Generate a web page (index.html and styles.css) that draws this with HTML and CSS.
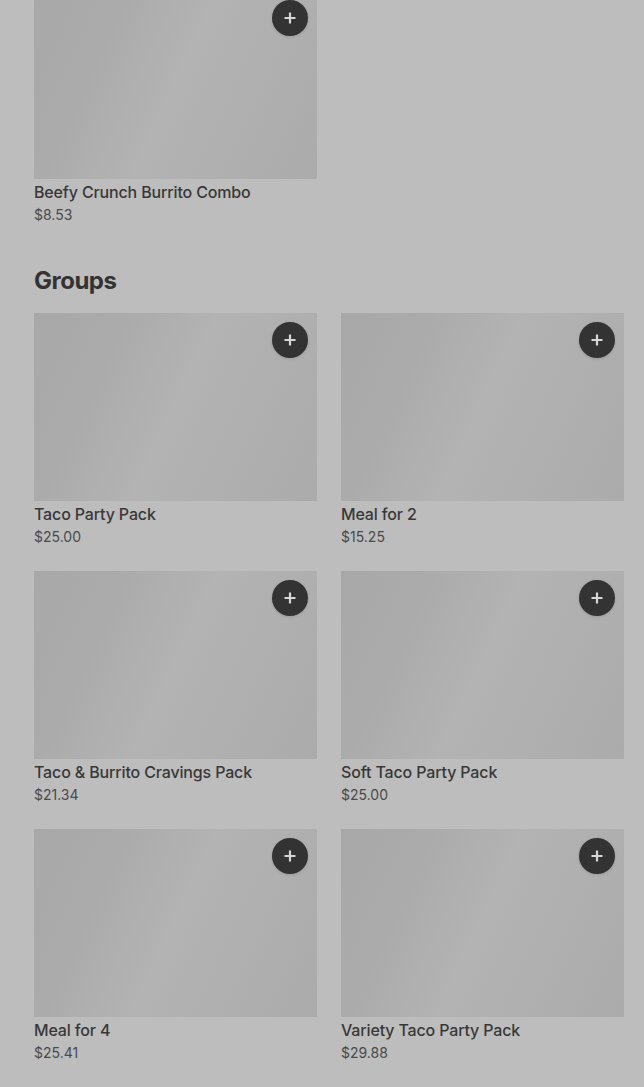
FILE: index.html
```html
<!DOCTYPE html>
<html lang="en">
<head>
<meta charset="utf-8">
<title>Menu</title>
<link rel="stylesheet" href="styles.css">
</head>
<body>
<main class="page">
  <section class="grid first">
    <article class="card">
      <div class="thumb">
        <button class="add" aria-label="Add"><svg viewBox="0 0 16 16" width="16" height="16"><path d="M8 2.5v11M2.5 8h11" stroke="#fff" stroke-width="2.2" fill="none"/></svg></button>
      </div>
      <div class="title">Beefy Crunch Burrito Combo</div>
      <div class="price">$8.53</div>
    </article>
  </section>

  <h2 class="heading">Groups</h2>

  <section class="grid">
    <article class="card">
      <div class="thumb"><button class="add" aria-label="Add"><svg viewBox="0 0 16 16" width="16" height="16"><path d="M8 2.5v11M2.5 8h11" stroke="#fff" stroke-width="2.2" fill="none"/></svg></button></div>
      <div class="title">Taco Party Pack</div>
      <div class="price">$25.00</div>
    </article>
    <article class="card">
      <div class="thumb"><button class="add" aria-label="Add"><svg viewBox="0 0 16 16" width="16" height="16"><path d="M8 2.5v11M2.5 8h11" stroke="#fff" stroke-width="2.2" fill="none"/></svg></button></div>
      <div class="title">Meal for 2</div>
      <div class="price">$15.25</div>
    </article>
    <article class="card">
      <div class="thumb"><button class="add" aria-label="Add"><svg viewBox="0 0 16 16" width="16" height="16"><path d="M8 2.5v11M2.5 8h11" stroke="#fff" stroke-width="2.2" fill="none"/></svg></button></div>
      <div class="title">Taco &amp; Burrito Cravings Pack</div>
      <div class="price">$21.34</div>
    </article>
    <article class="card">
      <div class="thumb"><button class="add" aria-label="Add"><svg viewBox="0 0 16 16" width="16" height="16"><path d="M8 2.5v11M2.5 8h11" stroke="#fff" stroke-width="2.2" fill="none"/></svg></button></div>
      <div class="title">Soft Taco Party Pack</div>
      <div class="price">$25.00</div>
    </article>
    <article class="card">
      <div class="thumb"><button class="add" aria-label="Add"><svg viewBox="0 0 16 16" width="16" height="16"><path d="M8 2.5v11M2.5 8h11" stroke="#fff" stroke-width="2.2" fill="none"/></svg></button></div>
      <div class="title">Meal for 4</div>
      <div class="price">$25.41</div>
    </article>
    <article class="card">
      <div class="thumb"><button class="add" aria-label="Add"><svg viewBox="0 0 16 16" width="16" height="16"><path d="M8 2.5v11M2.5 8h11" stroke="#fff" stroke-width="2.2" fill="none"/></svg></button></div>
      <div class="title">Variety Taco Party Pack</div>
      <div class="price">$29.88</div>
    </article>
  </section>
</main>
</body>
</html>
```

FILE: styles.css
```css
html, body {
  margin: 0;
  padding: 0;
  background: #bdbdbd;
}
body {
  font-family: Inter, "Noto Sans", "Liberation Sans", sans-serif;
  color: #3a3a3a;
  overflow: hidden;
  height: 1087px;
}
.page {
  padding: 0 20px 0 34px;
  margin-top: -9px;
}
.grid {
  display: grid;
  grid-template-columns: 283px 283px;
  column-gap: 24px;
  row-gap: 24px;
}
.thumb {
  position: relative;
  height: 188px;
  background: linear-gradient(115deg, #a8a8a8 0%, #ababab 25%, #b3b3b3 50%, #afafaf 75%, #ababab 100%);
}
.add {
  position: absolute;
  top: 9px;
  right: 9px;
  width: 36px;
  height: 36px;
  border: 0;
  border-radius: 50%;
  background: #333333;
  padding: 0;
  display: flex;
  align-items: center;
  justify-content: center;
  box-shadow: 0 1px 3px rgba(0,0,0,0.12);
}
.add svg {
  display: block;
}
.add path {
  stroke: #d6d6d6;
}
.title {
  margin-top: 2px;
  font-size: 16px;
  line-height: 22px;
  font-weight: 500;
  color: #383838;
  letter-spacing: -0.15px;
}
.price {
  margin-top: 2px;
  font-size: 14px;
  line-height: 20px;
  color: #4a4a4a;
}
.heading {
  margin: 40px 0 16px;
  font-size: 24px;
  line-height: 32px;
  font-weight: 700;
  color: #333;
  letter-spacing: -0.5px;
}
```
